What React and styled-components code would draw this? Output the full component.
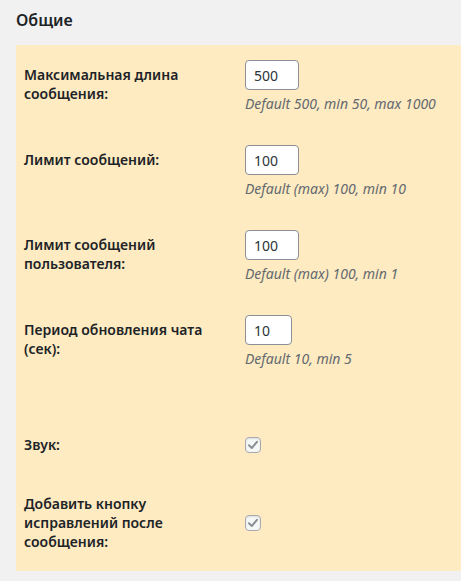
import React from "react";
import styled, { createGlobalStyle } from "styled-components";

const GlobalStyle = createGlobalStyle`
  html, body {
    margin: 0;
    padding: 0;
    background: #f1f1f1;
    overflow: hidden;
  }
  body {
    font-family: "Noto Sans", "Open Sans", sans-serif;
    color: #1d2327;
  }
`;

const Page = styled.div`
  padding: 9px 0 0 16px;
`;

const Heading = styled.h2`
  margin: 0 0 14px;
  font-size: 16px;
  font-weight: 600;
  line-height: 22px;
  color: #1d2327;
`;

const Panel = styled.div`
  background: #feebc1;
  padding: 0 0 0 8px;
`;

const Row = styled.div`
  display: flex;
  align-items: center;
`;

const Label = styled.div`
  align-self: flex-start;
  width: 200px;
  flex: none;
  padding: 20px 21px 20px 0;
  font-size: 14px;
  font-weight: 600;
  line-height: 19px;
`;

const Field = styled.div`
  padding: 15px 0 16px;
`;

const Input = styled.input`
  display: block;
  box-sizing: border-box;
  width: ${(p) => p.$w}px;
  height: 30px;
  margin: 0;
  padding: 0 8px;
  border: 1px solid #8c8f94;
  border-radius: 4px;
  background: #fff;
  font-family: inherit;
  font-size: 14px;
  color: #2c3338;
  outline: none;
`;

const Hint = styled.p`
  margin: 4px 0 0;
  font-size: 14px;
  line-height: 20px;
  font-style: italic;
  color: #646970;
  white-space: nowrap;
`;

const Spacer = styled.div`
  height: 30px;
`;

const Check = styled.span`
  display: flex;
  align-items: center;
  justify-content: center;
  box-sizing: border-box;
  width: 16px;
  height: 16px;
  border: 1px solid #a7aaad;
  border-radius: 4px;
  background: #f6f7f7;
  box-shadow: inset 0 1px 2px rgba(0, 0, 0, 0.1);
`;

const Checkbox = () => (
  <Check>
    <svg width="12" height="12" viewBox="0 0 12 12">
      <path
        d="M2 6.2 L4.8 9 L10 2.8"
        fill="none"
        stroke="#8c8f94"
        strokeWidth="2"
        strokeLinecap="round"
        strokeLinejoin="round"
      />
    </svg>
  </Check>
);

const fields = [
  { label: "Максимальная длина сообщения:", value: "500", w: 54, hint: "Default 500, min 50, max 1000" },
  { label: "Лимит сообщений:", value: "100", w: 54, hint: "Default (max) 100, min 10" },
  { label: "Лимит сообщений пользователя:", value: "100", w: 54, hint: "Default (max) 100, min 1" },
  { label: "Период обновления чата (сек):", value: "10", w: 47, hint: "Default 10, min 5" },
];

export default function App() {
  return (
    <>
      <GlobalStyle />
      <Page>
        <Heading>Общие</Heading>
        <Panel>
          {fields.map((f) => (
            <Row key={f.label}>
              <Label>{f.label}</Label>
              <Field>
                <Input $w={f.w} defaultValue={f.value} />
                <Hint>{f.hint}</Hint>
              </Field>
            </Row>
          ))}
          <Spacer />
          <Row>
            <Label>Звук:</Label>
            <Checkbox />
          </Row>
          <Row>
            <Label>Добавить кнопку исправлений после сообщения:</Label>
            <Checkbox />
          </Row>
        </Panel>
      </Page>
    </>
  );
}
